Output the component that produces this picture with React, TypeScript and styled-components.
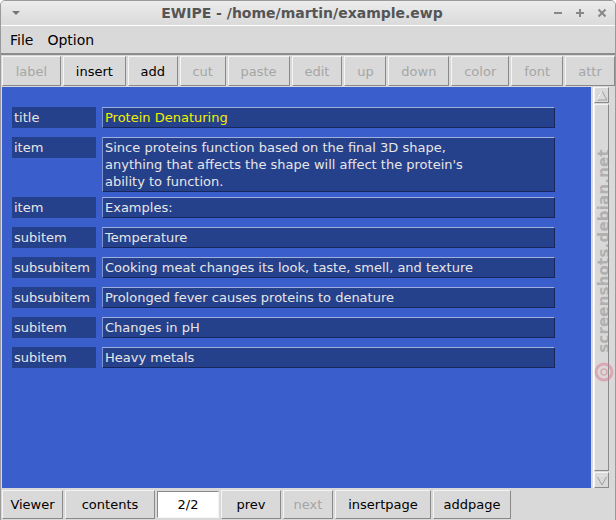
import React from "react";
import styled, { createGlobalStyle } from "styled-components";

const Global = createGlobalStyle`
  html, body { margin: 0; padding: 0; background: #ffffff; }
  body { font-family: "DejaVu Sans", Verdana, sans-serif; }
  #root { width: 616px; height: 520px; }
`;

const Window = styled.div`
  position: relative;
  width: 614px;
  height: 519px;
  background: #d9d9d9;
  border: 1px solid #9a9a9a;
  border-radius: 5px 5px 0 0;
  display: flex;
  flex-direction: column;
  overflow: hidden;
  font-size: 13px;
`;

const TitleBar = styled.div`
  height: 24px;
  display: flex;
  align-items: center;
  padding: 0 8px 0 10px;
  background: linear-gradient(#ececec, #dadada);
  border-bottom: 1px solid #ffffff;
  color: #555555;
`;

const TitleText = styled.div`
  flex: 1;
  text-align: center;
  font-weight: bold;
  font-size: 14px;
  padding-left: 30px;
`;

const WinButtons = styled.div`
  display: flex;
  gap: 12px;
  align-items: center;
`;

const MenuBar = styled.div`
  height: 27px;
  display: flex;
  align-items: center;
  gap: 14px;
  padding-left: 9px;
  font-size: 14px;
  color: #000;
  border-bottom: 2px solid #8c8c8c;
`;

const ToolBar = styled.div`
  display: flex;
  gap: 2px;
  padding: 1px 0 1px 1px;
  height: 30px;
`;

const Btn = styled.div<{ $w: number; $off?: boolean }>`
  width: ${(p) => p.$w}px;
  box-sizing: border-box;
  display: flex;
  align-items: center;
  justify-content: center;
  background: #d9d9d9;
  border: 1px solid;
  border-color: #f4f4f4 #8a8a8a #8a8a8a #f4f4f4;
  box-shadow: inset 0 0 0 1px #d9d9d9;
  color: ${(p) => (p.$off ? "#a6a6a6" : "#000000")};
  font-size: 13px;
`;

const Middle = styled.div`
  display: flex;
  height: 401px;
  padding-left: 1px;
`;

const Canvas = styled.div`
  width: 589px;
  background: #3a5fcd;
  padding: 20px 0 0 10px;
  box-sizing: border-box;
  display: flex;
  flex-direction: column;
`;

const Row = styled.div<{ $after: number }>`
  display: flex;
  gap: 6px;
  align-items: flex-start;
  margin-bottom: ${(p) => p.$after}px;
`;

const Label = styled.div`
  width: 84px;
  height: 21px;
  box-sizing: border-box;
  background: #26418c;
  color: #e6e6e6;
  padding-left: 2px;
  line-height: 21px;
`;

const Field = styled.div<{ $yellow?: boolean }>`
  width: 453px;
  min-height: 21px;
  box-sizing: border-box;
  background: #26418c;
  border-top: 1px solid #9fb0e0;
  border-left: 1px solid #7f93d2;
  border-bottom: 1px solid #16275e;
  border-right: 1px solid #16275e;
  color: ${(p) => (p.$yellow ? "#f0f000" : "#e6e6e6")};
  padding: 1px 2px 1px 2px;
  line-height: 17px;
  white-space: pre-line;
`;

const Scrollbar = styled.div`
  width: 16px;
  margin-left: 2px;
  display: flex;
  flex-direction: column;
  border-left: 1px solid #ffffff;
  box-sizing: border-box;
`;

const Arrow = styled.div`
  height: 14px;
  display: flex;
  align-items: center;
  justify-content: center;
  border: 1px solid;
  border-color: #f4f4f4 #8a8a8a #8a8a8a #f4f4f4;
`;

const Thumb = styled.div`
  flex: 1;
  border: 1px solid;
  border-color: #f4f4f4 #8a8a8a #8a8a8a #f4f4f4;
  margin: 1px 0;
`;

const BottomBar = styled.div`
  display: flex;
  gap: 2px;
  padding: 2px 0 0 1px;
  height: 29px;
`;

const Entry = styled.div`
  width: 62px;
  box-sizing: border-box;
  background: #ffffff;
  border: 1px solid;
  border-color: #8a8a8a #f4f4f4 #f4f4f4 #8a8a8a;
  display: flex;
  align-items: center;
  justify-content: center;
  color: #000;
  margin: 1px 0;
`;

const Watermark = styled.div`
  position: absolute;
  left: 603px;
  top: 250px;
  transform: translate(-50%, -50%) rotate(-90deg);
  white-space: nowrap;
  font-family: "DejaVu Sans", sans-serif;
  font-weight: bold;
  font-size: 15px;
  color: rgba(140, 140, 140, 0.55);
  letter-spacing: 0.2px;
`;

const Logo = styled.div`
  position: absolute;
  left: 593px;
  top: 361px;
  width: 20px;
  height: 20px;
`;

const rows: { label: string; text: string; yellow?: boolean; after: number }[] = [
  { label: "title", text: "Protein Denaturing", yellow: true, after: 9 },
  {
    label: "item",
    text:
      "Since proteins function based on the final 3D shape,\nanything that affects the shape will affect the protein's\nability to function.",
    after: 5,
  },
  { label: "item", text: "Examples:", after: 9 },
  { label: "subitem", text: "Temperature", after: 9 },
  { label: "subsubitem", text: "Cooking meat changes its look, taste, smell, and texture", after: 9 },
  { label: "subsubitem", text: "Prolonged fever causes proteins to denature", after: 9 },
  { label: "subitem", text: "Changes in pH", after: 9 },
  { label: "subitem", text: "Heavy metals", after: 9 },
];

const tools: { t: string; w: number; off?: boolean }[] = [
  { t: "label", w: 59, off: true },
  { t: "insert", w: 63 },
  { t: "add", w: 50 },
  { t: "cut", w: 46, off: true },
  { t: "paste", w: 62, off: true },
  { t: "edit", w: 51, off: true },
  { t: "up", w: 42, off: true },
  { t: "down", w: 61, off: true },
  { t: "color", w: 58, off: true },
  { t: "font", w: 52, off: true },
  { t: "attr", w: 50, off: true },
];

export default function App() {
  return (
    <>
      <Global />
      <Window>
        <TitleBar>
          <svg width="10" height="6" viewBox="0 0 10 6">
            <path d="M1 1 L9 1 L5 5 Z" fill="#777" />
          </svg>
          <TitleText>EWIPE - /home/martin/example.ewp</TitleText>
          <WinButtons>
            <svg width="10" height="10" viewBox="0 0 10 10">
              <path d="M1 5 H9" stroke="#888" strokeWidth="2" />
            </svg>
            <svg width="10" height="10" viewBox="0 0 10 10">
              <path d="M1 5 H9 M5 1 V9" stroke="#888" strokeWidth="2" />
            </svg>
            <svg width="10" height="10" viewBox="0 0 10 10">
              <path d="M1.5 1.5 L8.5 8.5 M8.5 1.5 L1.5 8.5" stroke="#888" strokeWidth="2" />
            </svg>
          </WinButtons>
        </TitleBar>
        <MenuBar>
          <span>File</span>
          <span>Option</span>
        </MenuBar>
        <ToolBar>
          {tools.map((b) => (
            <Btn key={b.t} $w={b.w} $off={b.off}>
              {b.t}
            </Btn>
          ))}
        </ToolBar>
        <Middle>
          <Canvas>
            {rows.map((r, i) => (
              <Row key={i} $after={r.after}>
                <Label>{r.label}</Label>
                <Field $yellow={r.yellow}>{r.text}</Field>
              </Row>
            ))}
          </Canvas>
          <Scrollbar>
            <Arrow>
              <svg width="12" height="11" viewBox="0 0 12 11">
                <path d="M6 1 L11 10 L1 10 Z" fill="none" stroke="#a0a0a0" strokeWidth="1" />
                <path d="M6 1 L1 10" stroke="#ffffff" strokeWidth="1" />
              </svg>
            </Arrow>
            <Thumb />
            <Arrow>
              <svg width="12" height="11" viewBox="0 0 12 11">
                <path d="M1 1 L11 1 L6 10 Z" fill="none" stroke="#a0a0a0" strokeWidth="1" />
                <path d="M1 1 L11 1" stroke="#ffffff" strokeWidth="1" />
              </svg>
            </Arrow>
          </Scrollbar>
        </Middle>
        <BottomBar>
          <Btn $w={61}>Viewer</Btn>
          <Btn $w={90}>contents</Btn>
          <Entry>2/2</Entry>
          <Btn $w={60}>prev</Btn>
          <Btn $w={50} $off>
            next
          </Btn>
          <Btn $w={96}>insertpage</Btn>
          <Btn $w={78}>addpage</Btn>
        </BottomBar>
        <Watermark>screenshots.debian.net</Watermark>
        <Logo>
          <svg width="20" height="20" viewBox="0 0 20 20">
            <circle cx="10" cy="10" r="8" fill="none" stroke="rgba(220,120,140,0.5)" strokeWidth="3" />
            <circle cx="10" cy="10" r="3" fill="none" stroke="rgba(220,120,140,0.5)" strokeWidth="1.5" />
          </svg>
        </Logo>
      </Window>
    </>
  );
}
